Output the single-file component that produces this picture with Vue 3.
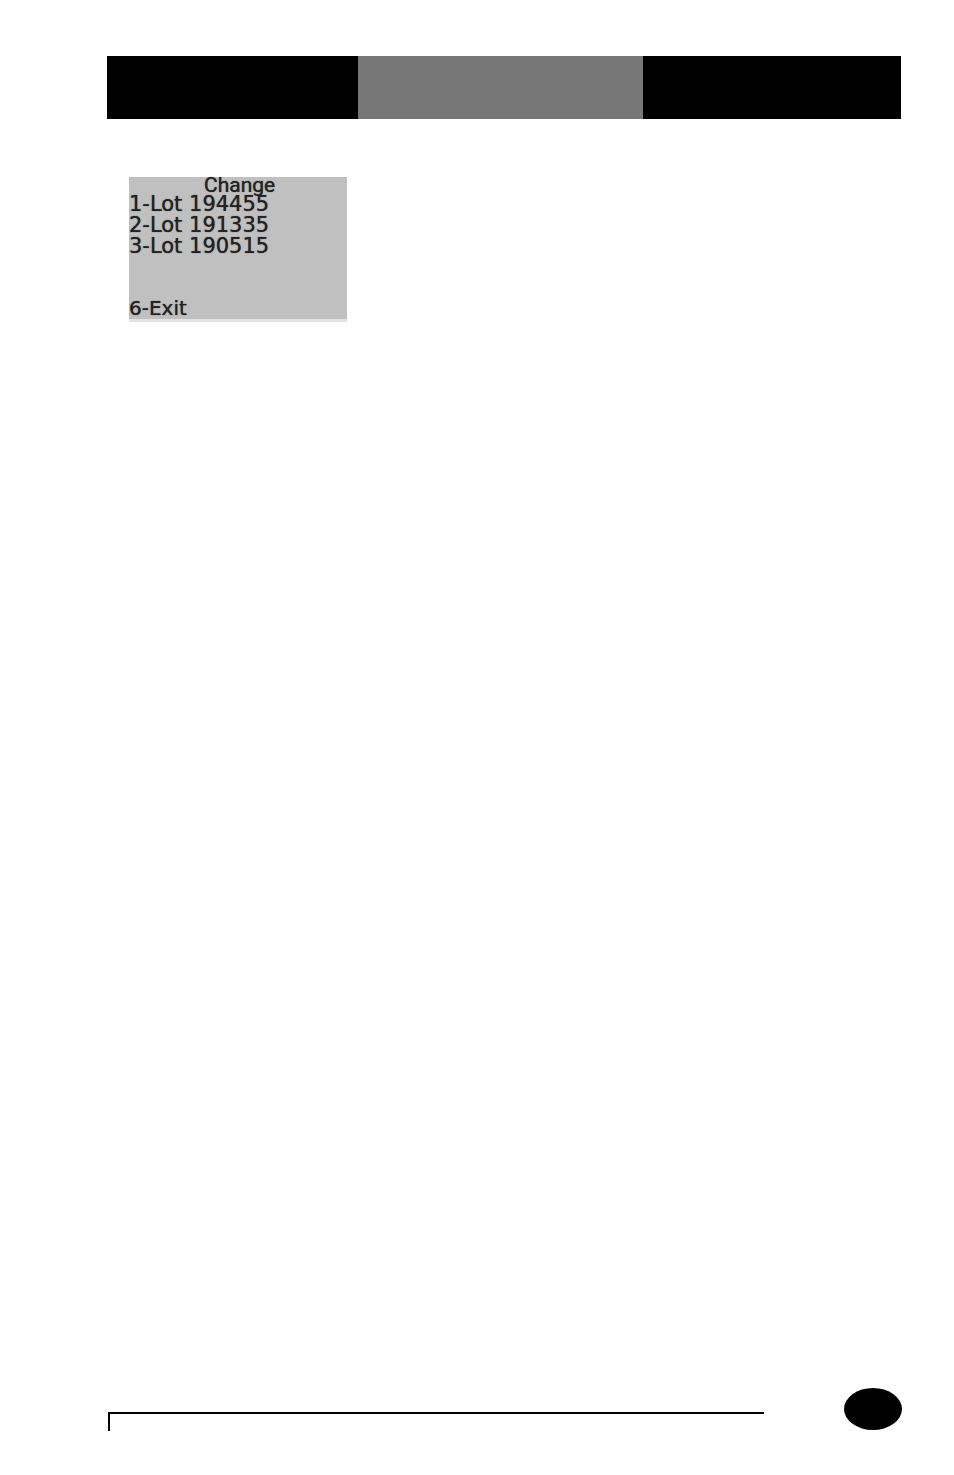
<script setup>
const lots = ['1-Lot 194455', '2-Lot 191335', '3-Lot 190515']
</script>

<template>
  <div class="page">
    <header class="banner">
      <div class="band"></div>
      <div class="band middle"></div>
      <div class="band"></div>
    </header>
    <main class="content">
      <section class="screen" aria-labelledby="screen-title">
        <h1 id="screen-title" class="title">Change</h1>
        <ul class="lots">
          <li v-for="lot in lots" :key="lot">{{ lot }}</li>
        </ul>
        <p class="exit">6-Exit</p>
      </section>
    </main>
    <footer class="footer">
      <div class="rule"></div>
      <div class="marker"></div>
    </footer>
  </div>
</template>

<style>
body {
  margin: 0;
  background: #fff;
}
</style>

<style scoped>
.page {
  box-sizing: border-box;
  min-height: 100vh;
  padding: 56px 52px 44px 107px;
  display: flex;
  flex-direction: column;
  background: #fff;
}

.banner {
  display: grid;
  grid-template-columns: 251fr 285fr 258fr;
  height: 63px;
  margin-right: 1px;
}

.band {
  background: #000;
}

.middle {
  background: #777;
}

.content {
  flex: 1;
  padding: 58px 22px;
}

.screen {
  box-sizing: border-box;
  width: 218px;
  background: #c0c0c0;
  border-bottom: 3px solid #e2e2e2;
  color: #222;
  font-family: "DejaVu Sans", sans-serif;
  font-size: 21px;
  line-height: 21px;
  text-shadow: 0 0 1px #333;
}

.title,
.lots,
.exit {
  margin: 0;
  padding: 0;
  font-weight: 400;
}

.title {
  padding-left: 75px;
  font-family: Roboto, sans-serif;
  font-size: 21px;
  line-height: 16px;
}

.lots {
  padding-top: 1px;
  list-style: none;
}

.exit {
  padding-top: 41px;
  font-size: 20px;
}

.footer {
  display: flex;
  align-items: flex-end;
  justify-content: space-between;
  gap: 80px;
  padding-left: 1px;
}

.rule {
  flex: 1;
  box-sizing: border-box;
  height: 19px;
  border-top: 2px solid #000;
  border-left: 2px solid #000;
}

.marker {
  width: 58px;
  height: 42px;
  margin-bottom: 1px;
  border-radius: 50%;
  background: #000;
}
</style>
